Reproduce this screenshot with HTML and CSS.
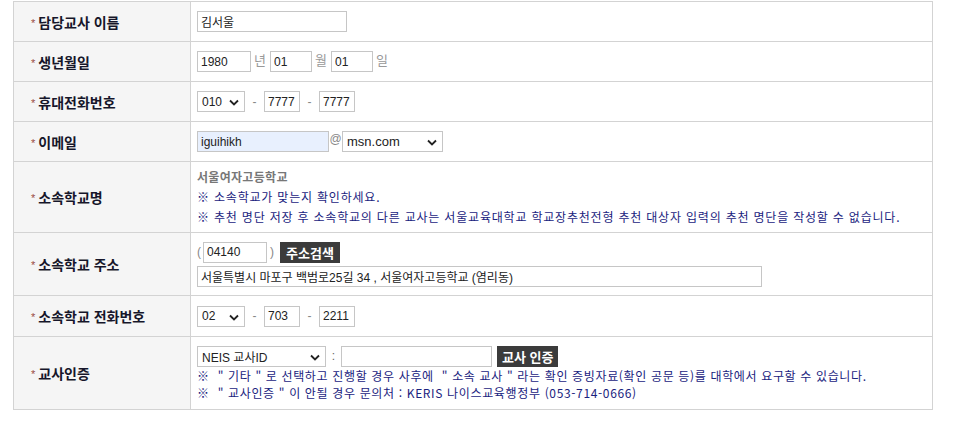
FILE: index.html
```html
<!DOCTYPE html>
<html lang="ko">
<head>
<meta charset="utf-8">
<link rel="stylesheet" href="styles.css">
</head>
<body>
<div class="wrap">
<table class="form">
  <tr class="r40">
    <th><span class="star">*</span>담당교사 이름</th>
    <td><input class="inp w150" type="text" value="김서울"></td>
  </tr>
  <tr class="r40">
    <th><span class="star">*</span>생년월일</th>
    <td>
      <div class="line">
        <input class="inp w54" type="text" value="1980"><span class="unit">년</span>
        <input class="inp w42" type="text" value="01"><span class="unit">월</span>
        <input class="inp w42" type="text" value="01"><span class="unit">일</span>
      </div>
    </td>
  </tr>
  <tr class="r40">
    <th><span class="star">*</span>휴대전화번호</th>
    <td>
      <div class="line">
        <span class="sel w48"><span class="seltxt">010</span><svg class="chev" width="10" height="7" viewBox="0 0 10 7"><path d="M1 1.5 L5 5.5 L9 1.5" fill="none" stroke="#222" stroke-width="1.8"/></svg></span>
        <span class="dash">-</span>
        <input class="inp w36" type="text" value="7777">
        <span class="dash">-</span>
        <input class="inp w36" type="text" value="7777">
      </div>
    </td>
  </tr>
  <tr class="r40">
    <th><span class="star">*</span>이메일</th>
    <td>
      <div class="line">
        <input class="inp w132 auto" type="text" value="iguihikh"><span class="at">@</span>
        <span class="sel w101 big"><span class="seltxt">msn.com</span><svg class="chev" width="10" height="7" viewBox="0 0 10 7"><path d="M1 1.5 L5 5.5 L9 1.5" fill="none" stroke="#222" stroke-width="1.8"/></svg></span>
      </div>
    </td>
  </tr>
  <tr class="r71">
    <th><span class="star">*</span>소속학교명</th>
    <td>
      <div class="school">서울여자고등학교</div>
      <div class="note">※ 소속학교가 맞는지 확인하세요.</div>
      <div class="note">※ 추천 명단 저장 후 소속학교의 다른 교사는 서울교육대학교 학교장추천전형 추천 대상자 입력의 추천 명단을 작성할 수 없습니다.</div>
    </td>
  </tr>
  <tr class="r63">
    <th><span class="star">*</span>소속학교 주소</th>
    <td>
      <div class="line">
        <span class="paren">(</span><input class="inp w64" type="text" value="04140"><span class="paren rp">)</span>
        <span class="btn">주소검색</span>
      </div>
      <div class="line mt3">
        <input class="inp w565" type="text" value="서울특별시 마포구 백범로25길 34 , 서울여자고등학교 (염리동)">
      </div>
    </td>
  </tr>
  <tr class="r41">
    <th><span class="star">*</span>소속학교 전화번호</th>
    <td>
      <div class="line">
        <span class="sel w48"><span class="seltxt">02</span><svg class="chev" width="10" height="7" viewBox="0 0 10 7"><path d="M1 1.5 L5 5.5 L9 1.5" fill="none" stroke="#222" stroke-width="1.8"/></svg></span>
        <span class="dash">-</span>
        <input class="inp w36" type="text" value="703">
        <span class="dash">-</span>
        <input class="inp w36" type="text" value="2211">
      </div>
    </td>
  </tr>
  <tr class="r73">
    <th><span class="star">*</span>교사인증</th>
    <td>
      <div class="line">
        <span class="sel w129"><span class="seltxt">NEIS 교사ID</span><svg class="chev" width="10" height="7" viewBox="0 0 10 7"><path d="M1 1.5 L5 5.5 L9 1.5" fill="none" stroke="#222" stroke-width="1.8"/></svg></span>
        <span class="colon">:</span>
        <input class="inp w151" type="text" value="">
        <span class="btn b2">교사 인증</span>
      </div>
      <div class="note n2">※ &nbsp;" 기타 " 로 선택하고 진행할 경우 사후에 &nbsp;" 소속 교사 " 라는 확인 증빙자료(확인 공문 등)를 대학에서 요구할 수 있습니다.</div>
      <div class="note n2">※ &nbsp;" 교사인증 " 이 안될 경우 문의처 : KERIS 나이스교육행정부 (053-714-0666)</div>
    </td>
  </tr>
</table>
</div>
</body>
</html>
```
FILE: styles.css
```css
html, body {
  margin: 0;
  padding: 0;
  background: #fff;
}
body {
  font-family: "Liberation Sans", "Noto Sans CJK KR", sans-serif;
  font-size: 12px;
  color: #333;
}
.wrap {
  padding: 1px 0 0 13px;
}
.form {
  border-collapse: collapse;
  width: 920px;
  table-layout: fixed;
}
.form th, .form td {
  border: 1px solid #d3d3d3;
  vertical-align: middle;
  padding: 0;
}
.form th {
  width: 159px;
  background: #f5f5f5;
  text-align: left;
  padding-left: 17px;
  font-family: "Noto Sans CJK KR", sans-serif;
  font-weight: bold;
  font-size: 14px;
  color: #16162a;
  letter-spacing: 0;
}
.form td {
  padding-left: 6px;
  background: #fff;
}
.r40 th, .r40 td { height: 39px; }
.r41 th, .r41 td { height: 40px; }
.r71 th, .r71 td { height: 70px; }
.r63 th, .r63 td { height: 62px; }
.r73 th, .r73 td { height: 72px; }
.star {
  color: #9a4a44;
  font-family: "Liberation Sans", sans-serif;
  font-size: 11px;
  font-weight: normal;
  margin-right: 3px;
  position: relative;
  top: -1px;
}
.line {
  display: flex;
  align-items: center;
  height: 21px;
}
.mt3 { margin-top: 3px; }
.inp {
  box-sizing: border-box;
  height: 21px;
  border: 1px solid #c6c6c6;
  padding: 0 3px;
  margin: 0;
  font-family: "Liberation Sans", "Noto Sans CJK KR", sans-serif;
  font-size: 12px;
  color: #222;
  background: #fff;
  outline: none;
}
.auto { background: #e8f0fe; }
.w150 { width: 150px; }
.w54 { width: 54px; }
.w42 { width: 42px; }
.w36 { width: 36px; }
.w64 { width: 64px; }
.w132 { width: 132px; }
.w151 { width: 151px; }
.w565 { width: 565px; }
.unit {
  color: #999;
  font-family: "Noto Sans CJK KR", sans-serif;
  font-size: 13px;
  width: 19px;
  padding-left: 3px;
  box-sizing: border-box;
  position: relative;
  top: -2px;
}
.dash {
  color: #888;
  width: 19px;
  text-align: center;
}
.at {
  color: #888;
  width: 13px;
  text-align: center;
  position: relative;
  top: -3px;
}
.paren {
  color: #888;
  width: 6px;
}
.paren.rp {
  width: 10px;
  text-align: center;
}
.colon {
  color: #666;
  width: 15px;
  text-align: center;
}
.sel {
  box-sizing: border-box;
  height: 21px;
  border: 1px solid #c6c6c6;
  background: #fff;
  display: inline-flex;
  align-items: center;
  position: relative;
  padding-left: 4px;
  color: #222;
  font-size: 12px;
}
.sel.big { font-size: 13px; }
.w48 { width: 48px; }
.w101 { width: 101px; }
.w129 { width: 129px; }
.chev {
  position: absolute;
  right: 5px;
  top: 7px;
}
.btn {
  background: #3b3b3b;
  color: #fff;
  font-family: "Noto Sans CJK KR", sans-serif;
  font-weight: bold;
  font-size: 13px;
  height: 21px;
  line-height: 21px;
  padding: 0 6px;
  margin-left: 3px;
}
.btn.b2 { margin-left: 5px; padding: 0 5px; }
.school {
  font-family: "Noto Sans CJK KR", sans-serif;
  font-weight: bold;
  font-size: 12px;
  color: #777;
  line-height: 20px;
  letter-spacing: 0.3px;
}
.note {
  font-family: "Noto Sans CJK KR", sans-serif;
  font-size: 12px;
  color: #1a237e;
  line-height: 20px;
  letter-spacing: 0.8px;
}
.note.n2 {
  line-height: 17px;
  letter-spacing: 0.65px;
}
```
